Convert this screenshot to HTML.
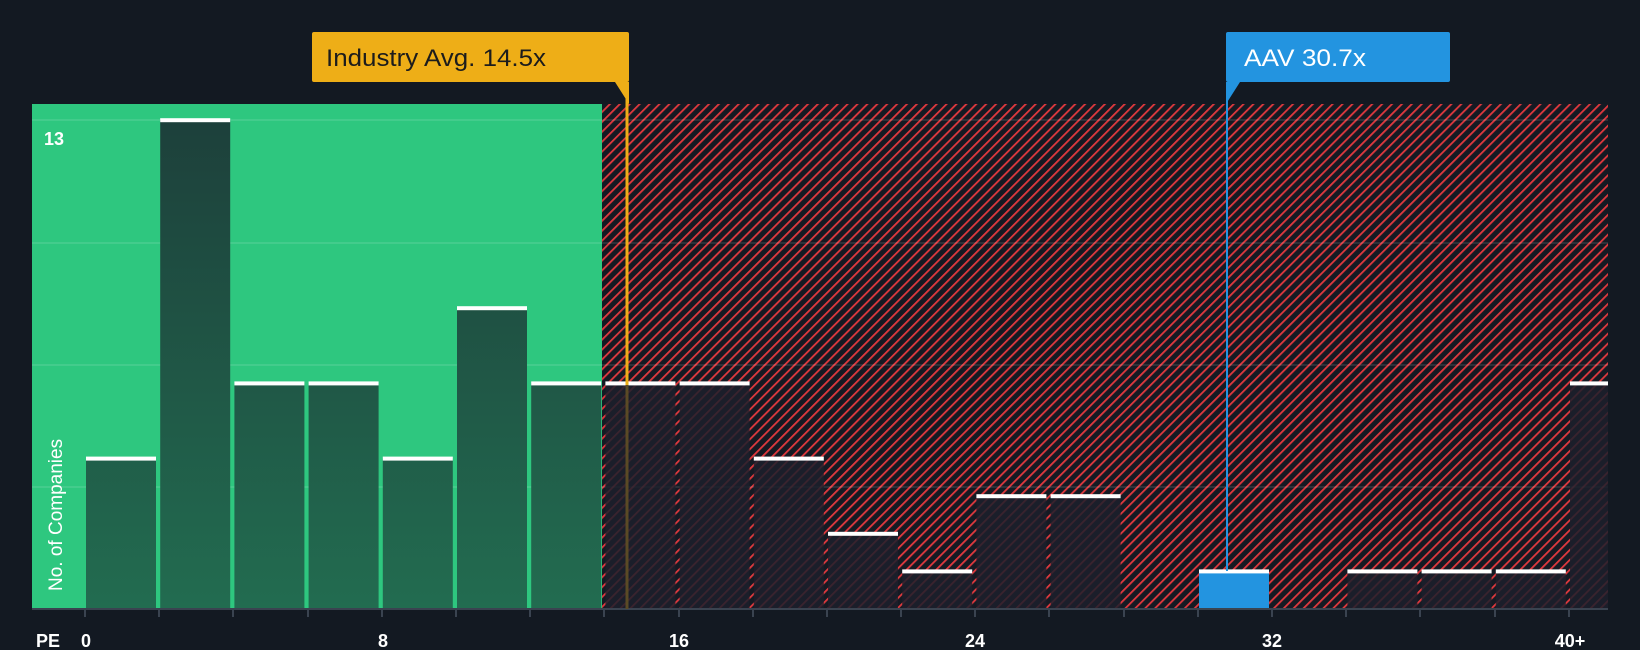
<!DOCTYPE html>
<html><head><meta charset="utf-8"><style>
html,body{margin:0;padding:0;background:#131922;}
svg{display:block}
text{font-family:"Liberation Sans",sans-serif;}
</style></head><body>
<svg width="1640" height="650" viewBox="0 0 1640 650" xmlns="http://www.w3.org/2000/svg">
<defs>
<pattern id="h" patternUnits="userSpaceOnUse" width="7" height="7" patternTransform="rotate(45)">
<rect width="7" height="7" fill="#151a23"/>
<rect x="0" y="0" width="1.8" height="7" fill="#e0393e"/>
</pattern>
<linearGradient id="g" gradientUnits="userSpaceOnUse" x1="0" y1="120" x2="0" y2="609">
<stop offset="0" stop-color="#1d403b"/><stop offset="1" stop-color="#226c50"/>
</linearGradient>
</defs>
<rect width="1640" height="650" fill="#131922"/>
<rect x="32" y="104" width="570" height="505" fill="#2ec77f"/>
<rect x="602" y="104" width="1006" height="505" fill="url(#h)"/>
<g stroke="#ffffff" stroke-opacity="0.1" stroke-width="2">
<line x1="32" y1="120" x2="1608" y2="120"/>
<line x1="32" y1="243" x2="1608" y2="243"/>
<line x1="32" y1="365" x2="1608" y2="365"/>
<line x1="32" y1="487" x2="1608" y2="487"/>
</g>
<g fill="url(#g)">
<rect x="86" y="458.6" width="70" height="150.4"/>
<rect x="160.2" y="120.2" width="70" height="488.8"/>
<rect x="234.4" y="383.4" width="70" height="225.6"/>
<rect x="308.6" y="383.4" width="70" height="225.6"/>
<rect x="382.8" y="458.6" width="70" height="150.4"/>
<rect x="457" y="308.2" width="70" height="300.8"/>
<rect x="531.2" y="383.4" width="70" height="225.6"/>
</g>
<g fill="#1c202b" fill-opacity="0.85">
<rect x="605.4" y="383.4" width="70" height="225.6"/>
<rect x="679.6" y="383.4" width="70" height="225.6"/>
<rect x="753.8" y="458.6" width="70" height="150.4"/>
<rect x="828" y="533.8" width="70" height="75.2"/>
<rect x="902.2" y="571.4" width="70" height="37.6"/>
<rect x="976.4" y="496.2" width="70" height="112.8"/>
<rect x="1050.6" y="496.2" width="70" height="112.8"/>
<rect x="1347.4" y="571.4" width="70" height="37.6"/>
<rect x="1421.6" y="571.4" width="70" height="37.6"/>
<rect x="1495.8" y="571.4" width="70" height="37.6"/>
<rect x="1570" y="383.4" width="38" height="225.6"/>
</g>
<rect x="1199" y="571.4" width="70" height="37.6" fill="#2394e0"/>
<g fill="#ffffff">
<rect x="86" y="456.6" width="70" height="4"/>
<rect x="160.2" y="118.2" width="70" height="4"/>
<rect x="234.4" y="381.4" width="70" height="4"/>
<rect x="308.6" y="381.4" width="70" height="4"/>
<rect x="382.8" y="456.6" width="70" height="4"/>
<rect x="457" y="306.2" width="70" height="4"/>
<rect x="531.2" y="381.4" width="70" height="4"/>
<rect x="605.4" y="381.4" width="70" height="4"/>
<rect x="679.6" y="381.4" width="70" height="4"/>
<rect x="753.8" y="456.6" width="70" height="4"/>
<rect x="828" y="531.8" width="70" height="4"/>
<rect x="902.2" y="569.4" width="70" height="4"/>
<rect x="976.4" y="494.2" width="70" height="4"/>
<rect x="1050.6" y="494.2" width="70" height="4"/>
<rect x="1199" y="569.4" width="70" height="4"/>
<rect x="1347.4" y="569.4" width="70" height="4"/>
<rect x="1421.6" y="569.4" width="70" height="4"/>
<rect x="1495.8" y="569.4" width="70" height="4"/>
<rect x="1570" y="381.4" width="38" height="4"/>
</g>
<line x1="32" y1="609" x2="1608" y2="609" stroke="#3a4350" stroke-width="2"/>
<g stroke="#3a4350" stroke-width="2">
<line x1="85" y1="609" x2="85" y2="617"/><line x1="159" y1="609" x2="159" y2="617"/><line x1="233" y1="609" x2="233" y2="617"/><line x1="308" y1="609" x2="308" y2="617"/><line x1="382" y1="609" x2="382" y2="617"/><line x1="456" y1="609" x2="456" y2="617"/><line x1="530" y1="609" x2="530" y2="617"/><line x1="604" y1="609" x2="604" y2="617"/><line x1="679" y1="609" x2="679" y2="617"/><line x1="753" y1="609" x2="753" y2="617"/><line x1="827" y1="609" x2="827" y2="617"/><line x1="901" y1="609" x2="901" y2="617"/><line x1="975" y1="609" x2="975" y2="617"/><line x1="1049" y1="609" x2="1049" y2="617"/><line x1="1124" y1="609" x2="1124" y2="617"/><line x1="1198" y1="609" x2="1198" y2="617"/><line x1="1272" y1="609" x2="1272" y2="617"/><line x1="1346" y1="609" x2="1346" y2="617"/><line x1="1420" y1="609" x2="1420" y2="617"/><line x1="1495" y1="609" x2="1495" y2="617"/><line x1="1569" y1="609" x2="1569" y2="617"/>
</g>
<line x1="627" y1="82" x2="627" y2="385" stroke="#eeae17" stroke-width="3"/>
<rect x="625.5" y="385" width="3" height="224" fill="#5a4a25"/>
<line x1="1227" y1="82" x2="1227" y2="571" stroke="#2394e0" stroke-width="2"/>
<rect x="312" y="32" width="317" height="50" rx="2" fill="#eeae17"/>
<polygon points="615,82 629,82 629,104" fill="#eeae17"/>
<text x="326" y="66" font-size="24" fill="#1c1c1c" textLength="220" lengthAdjust="spacingAndGlyphs">Industry Avg. 14.5x</text>
<rect x="1226" y="32" width="224" height="50" rx="2" fill="#2394e0"/>
<polygon points="1226,82 1240,82 1226,104" fill="#2394e0"/>
<text x="1244" y="66" font-size="24" fill="#ffffff" textLength="122" lengthAdjust="spacingAndGlyphs">AAV 30.7x</text>
<text x="44" y="145" font-size="18" font-weight="bold" fill="#ffffff">13</text>
<text transform="translate(62,591) rotate(-90)" font-size="19" fill="#ffffff">No. of Companies</text>
<g font-size="18" font-weight="bold" fill="#ffffff" text-anchor="middle">
<text x="48" y="647">PE</text>
<text x="86" y="647">0</text>
<text x="383" y="647">8</text>
<text x="679" y="647">16</text>
<text x="975" y="647">24</text>
<text x="1272" y="647">32</text>
<text x="1570" y="647">40+</text>
</g>
</svg>
</body></html>
